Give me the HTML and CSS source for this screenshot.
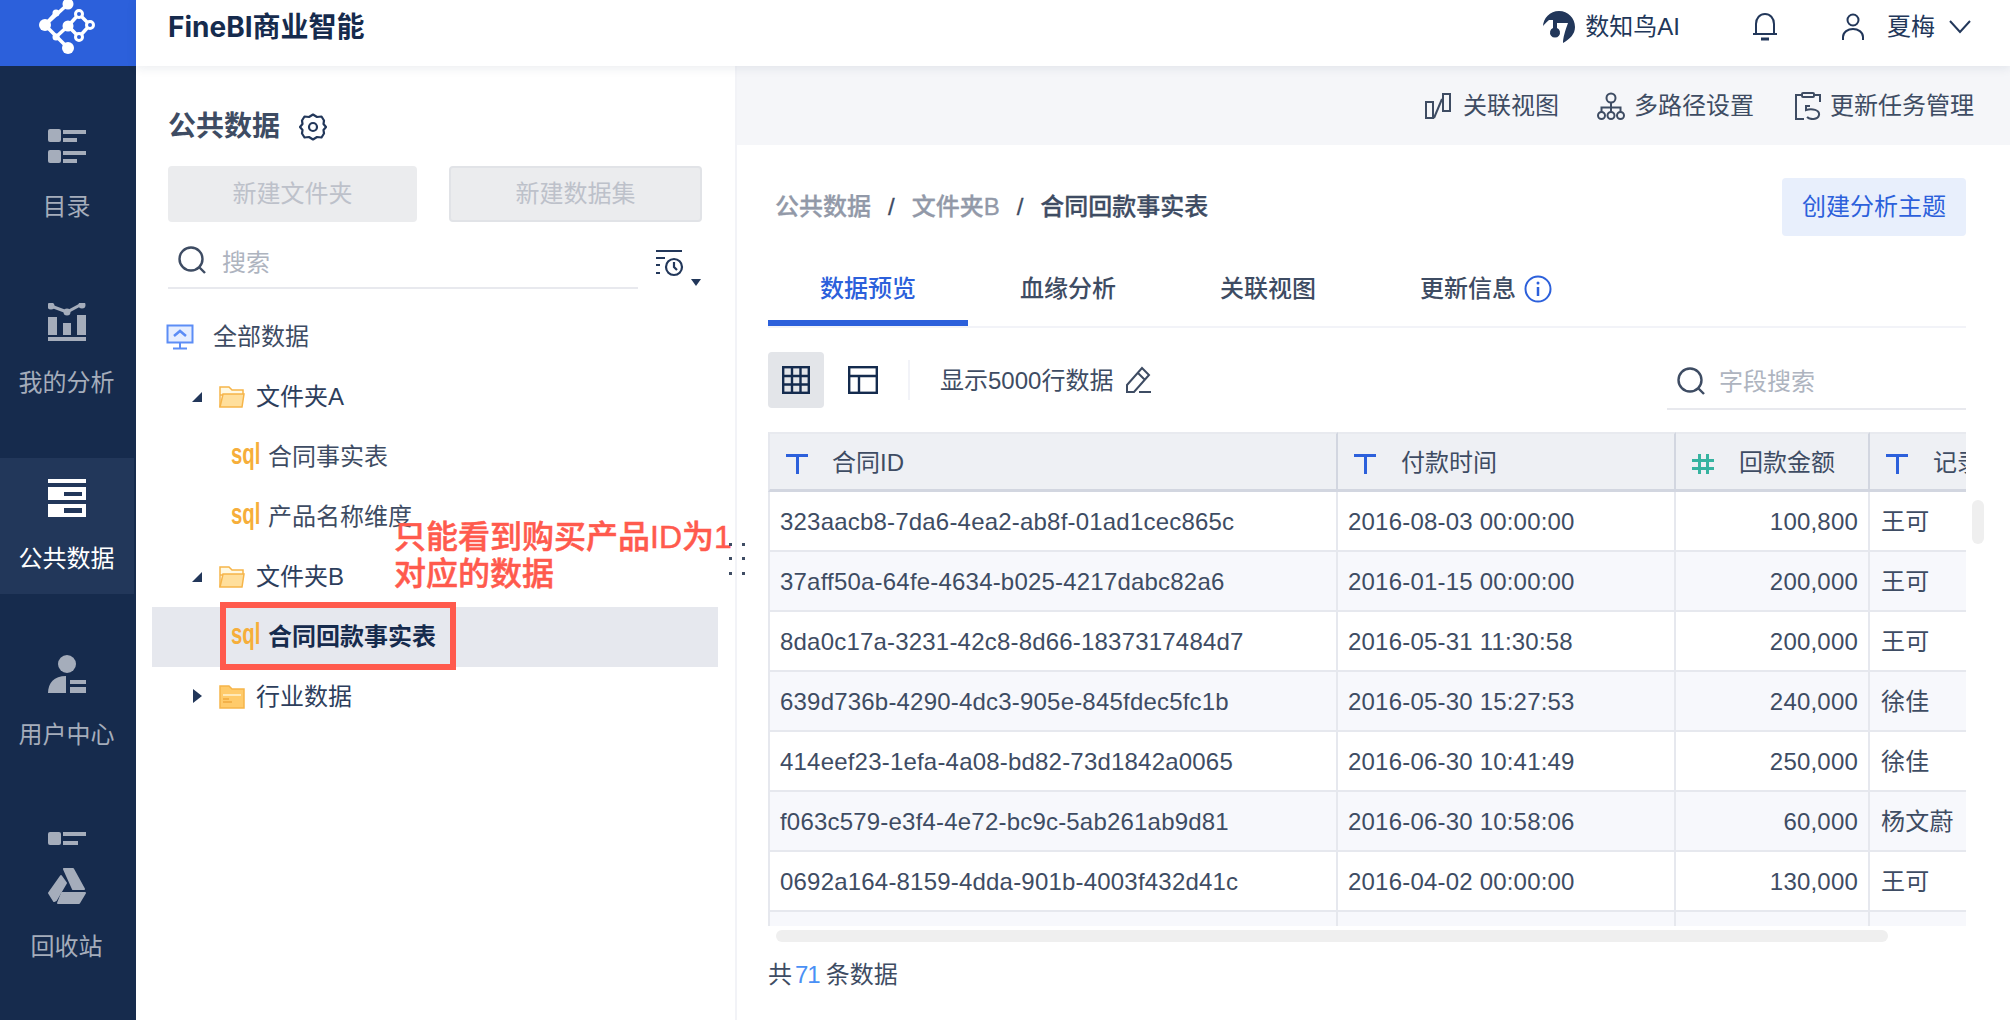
FILE: index.html
```html
<!DOCTYPE html>
<html lang="zh">
<head>
<meta charset="utf-8">
<title>FineBI商业智能</title>
<link rel="stylesheet" href="styles.css">
</head>
<body>
<div class="app">
  <aside class="side">
    <div class="logo">
      <svg width="66" height="60" viewBox="33 0 66 60" fill="none" stroke="#fff">
        <path d="M66 4L43 25L66 48M43 25L54 13M54 37L66 26L77 37L88 25L77 14L66 26" stroke-width="3.5"/>
        <g fill="#fff" stroke="none"><circle cx="66" cy="4" r="5.5"/><circle cx="43" cy="25" r="6"/><circle cx="54" cy="13" r="3.5"/><circle cx="66" cy="26" r="5.5"/><circle cx="54" cy="37" r="3.5"/><circle cx="66" cy="48" r="6"/></g>
        <g fill="#2C60DB" stroke-width="3"><circle cx="77" cy="14" r="3.5"/><circle cx="88" cy="25" r="3.5"/><circle cx="77" cy="37" r="3.5"/></g>
      </svg>
    </div>
    <nav class="nav">
      <a class="nav-item">
        <svg class="nav-icon" width="38" height="38" viewBox="0 0 38 38" fill="currentColor"><rect x="0" y="2" width="13" height="13" rx="2"/><rect x="15" y="3" width="23" height="4"/><rect x="15" y="11" width="14" height="4"/><rect x="0" y="23" width="13" height="13" rx="2"/><rect x="15" y="24" width="23" height="4"/><rect x="15" y="32" width="14" height="4"/></svg>
        <span>目录</span>
      </a>
      <a class="nav-item">
        <svg class="nav-icon" width="38" height="38" viewBox="0 0 38 38" fill="currentColor"><path d="M3 3L19 9L34 1" fill="none" stroke="currentColor" stroke-width="3"/><circle cx="3" cy="3" r="3.5"/><circle cx="19" cy="9" r="3.5"/><circle cx="34" cy="2" r="3.5"/><rect x="0" y="14" width="9" height="18"/><rect x="15" y="20" width="8" height="12"/><rect x="29" y="12" width="9" height="20"/><rect x="0" y="34" width="38" height="4"/></svg>
        <span>我的分析</span>
      </a>
      <a class="nav-item active">
        <svg class="nav-icon" width="38" height="38" viewBox="0 0 38 38"><rect width="38" height="4" fill="#fff"/><rect y="8" width="38" height="13" fill="#fff"/><rect x="16" y="13" width="18" height="4" fill="#22375A"/><rect y="25" width="38" height="13" fill="#fff"/><rect x="16" y="29" width="18" height="5" fill="#22375A"/></svg>
        <span>公共数据</span>
      </a>
      <a class="nav-item">
        <svg class="nav-icon" width="38" height="38" viewBox="0 0 38 38" fill="currentColor"><circle cx="19" cy="9" r="9"/><path d="M0 38C0 28 6 21 18 21V38Z"/><rect x="22" y="25" width="16" height="4"/><rect x="22" y="32" width="16" height="6"/></svg>
        <span>用户中心</span>
      </a>
      <a class="nav-item">
        <svg class="nav-stray" width="38" height="14" viewBox="0 0 38 14" fill="currentColor"><rect y="1" width="13" height="13" rx="2"/><rect x="15" y="1" width="23" height="4"/><rect x="15" y="10" width="15" height="4"/></svg>
        <svg class="nav-icon" width="40" height="38" viewBox="0 0 40 38" fill="currentColor" stroke="currentColor" stroke-width="2" stroke-linejoin="round"><path d="M17 2H26L37 22H26Z"/><path d="M14 9L19 16L9 33L7 34L2 26Z"/><path d="M15 26H38L32 36H11Z"/></svg>
        <span>回收站</span>
      </a>
    </nav>
  </aside>

  <div class="main">
    <header class="topbar">
      <div class="brand">FineBI商业智能</div>
      <div class="top-right">
        <div class="top-ai">
          <svg width="32" height="32" viewBox="0 0 32 32"><path d="M16 0C25 0 32 7 32 16C32 23 27 28 20 32C20 27 22 20 25 12H14V17A5 5 0 1 1 10 17V9H6C3 12 0 14 0 16C0 7 7 0 16 0Z" fill="#22375A"/></svg>
          <span>数知鸟AI</span>
        </div>
        <svg class="top-bell" width="26" height="30" viewBox="0 0 26 30" fill="none" stroke="#22375A" stroke-width="2"><path d="M1 22H25M4 22V12C4 6 8 2 13 2C18 2 22 6 22 12V22"/><path d="M9 27H17" stroke-width="3"/></svg>
        <svg class="top-user" width="22" height="28" viewBox="0 0 22 28" fill="none" stroke="#22375A" stroke-width="2"><circle cx="11" cy="7" r="5.5"/><path d="M1 27V24C1 19 6 16 11 16C16 16 21 19 21 24V27"/></svg>
        <span class="top-name">夏梅</span>
        <svg width="22" height="14" viewBox="0 0 22 14" fill="none" stroke="#22375A" stroke-width="2"><path d="M1 1L11 12L21 1"/></svg>
      </div>
    </header>

    <div class="content">
      <section class="tree-panel">
        <div class="panel-title">
          <span>公共数据</span>
          <svg width="28" height="28" viewBox="0 0 28 28" fill="none" stroke="#22375A" stroke-width="2.2" stroke-linejoin="round"><path d="M14 1.5L18 4L22.5 3.5L25 7.5L24.5 11L27 14L24.5 17L25 20.5L22.5 24.5L18 24L14 26.5L10 24L5.5 24.5L3 20.5L3.5 17L1 14L3.5 11L3 7.5L5.5 3.5L10 4Z"/><circle cx="14" cy="14" r="4"/></svg>
        </div>
        <div class="panel-btns">
          <button class="ghost first">新建文件夹</button>
          <button class="ghost second">新建数据集</button>
        </div>
        <div class="search-row">
          <div class="search-box">
            <svg width="28" height="28" viewBox="0 0 28 28" fill="none" stroke="#3E4C63" stroke-width="2.4"><circle cx="13" cy="13" r="11.5"/><path d="M21 21L27 27"/></svg>
            <span>搜索</span>
          </div>
          <div class="sort-btn">
            <svg width="28" height="28" viewBox="0 0 28 28" fill="none" stroke="#22375A" stroke-width="2.2"><path d="M0 2H26M0 9H9M0 16H4M0 24H4"/><circle cx="18" cy="18" r="8"/><path d="M18 13V18L21 21"/></svg>
            <i class="sort-caret"></i>
          </div>
        </div>
        <ul class="tree">
          <li class="row lv0">
            <svg width="28" height="26" viewBox="0 0 28 26"><rect x="1.5" y="1.5" width="25" height="17" fill="#E6EEFF" stroke="#5C8DF6" stroke-width="2"/><path d="M8 12L14 7L20 12" fill="none" stroke="#5C8DF6" stroke-width="2.5"/><path d="M14 19V24M7 24.500H21" stroke="#5C8DF6" stroke-width="2"/></svg>
            <span>全部数据</span>
          </li>
          <li class="row lv1">
            <i class="caret open"></i>
            <svg width="26" height="22" viewBox="0 0 26 22"><path d="M1 21V1H10L13 4H24V9H1Z" fill="#FFF9E3" stroke="#F6B54A" stroke-width="1.500"/><path d="M1 21L4 8H25L23 21Z" fill="#FFDF9C" stroke="#F6B54A" stroke-width="1.500"/></svg>
            <span>文件夹A</span>
          </li>
          <li class="row lv2"><b class="sql">sql</b><span>合同事实表</span></li>
          <li class="row lv2"><b class="sql">sql</b><span>产品名称维度</span></li>
          <li class="row lv1">
            <i class="caret open"></i>
            <svg width="26" height="22" viewBox="0 0 26 22"><path d="M1 21V1H10L13 4H24V9H1Z" fill="#FFF9E3" stroke="#F6B54A" stroke-width="1.500"/><path d="M1 21L4 8H25L23 21Z" fill="#FFDF9C" stroke="#F6B54A" stroke-width="1.500"/></svg>
            <span>文件夹B</span>
          </li>
          <li class="row lv2 selected"><b class="sql">sql</b><span>合同回款事实表</span></li>
          <li class="row lv1">
            <i class="caret closed"></i>
            <svg width="26" height="24" viewBox="0 0 26 24"><path d="M1 23V1H10L13 4H25V23Z" fill="#FFCB6B" stroke="#F6B54A" stroke-width="1.500"/><path d="M4 9H22V11H4Z" fill="#FFE9B8"/><path d="M4 14H10M4 17H13" stroke="#EFA93F" stroke-width="1.500"/></svg>
            <span>行业数据</span>
          </li>
        </ul>
        <div class="mark-box"></div>
        <div class="mark-text">只能看到购买产品ID为1<br>对应的数据</div>
        <svg class="drag-dots" width="16" height="32" viewBox="0 0 16 32" fill="#3E4C63"><rect x="0" width="3" height="3"/><rect x="13" width="3" height="3"/><rect x="0" y="14" width="3" height="3"/><rect x="13" y="14" width="3" height="3"/><rect x="0" y="29" width="3" height="3"/><rect x="13" y="29" width="3" height="3"/></svg>
      </section>

      <section class="detail">
        <div class="detail-bar">
          <a class="bar-item">
            <svg width="26" height="26" viewBox="0 0 26 26" fill="none" stroke="#3E4C63" stroke-width="2"><rect x="1" y="9" width="7" height="16"/><rect x="18" y="1" width="7" height="17"/><path d="M9 25L17 6"/></svg>
            <span>关联视图</span>
          </a>
          <a class="bar-item">
            <svg width="28" height="28" viewBox="0 0 28 28" fill="none" stroke="#3E4C63" stroke-width="2"><circle cx="14" cy="6" r="4.500"/><circle cx="4.500" cy="23.500" r="3.500"/><circle cx="14" cy="23.500" r="3.500"/><circle cx="23.500" cy="23.500" r="3.500"/><path d="M14 11V20M4.500 20V15.500H23.500V20"/></svg>
            <span>多路径设置</span>
          </a>
          <a class="bar-item">
            <svg width="26" height="28" viewBox="0 0 26 28" fill="none" stroke="#3E4C63" stroke-width="2"><path d="M7 3H1V27H9M19 3H25V10"/><rect x="7" y="1" width="12" height="4" rx="1"/><path d="M15 14H11V18C17 16 25 18 24 23C23 28 15 28 12 25"/></svg>
            <span>更新任务管理</span>
          </a>
        </div>
        <div class="detail-body">
          <div class="crumb-row">
            <div class="crumbs">
              <span class="crumb">公共数据</span><span class="sep">/</span>
              <span class="crumb">文件夹B</span><span class="sep">/</span>
              <span class="crumb now">合同回款事实表</span>
            </div>
            <button class="create">创建分析主题</button>
          </div>
          <div class="tabs">
            <a class="tab on">数据预览</a>
            <a class="tab">血缘分析</a>
            <a class="tab">关联视图</a>
            <a class="tab info">更新信息
              <svg width="28" height="28" viewBox="0 0 28 28" fill="none" stroke="#2C60DB" stroke-width="2"><circle cx="14" cy="14" r="12.500"/><path d="M14 12V21" stroke-width="2.500"/><circle cx="14" cy="8" r="1.500" fill="#2C60DB" stroke="none"/></svg>
            </a>
          </div>
          <div class="tools">
            <button class="tool on">
              <svg width="28" height="28" viewBox="0 0 28 28" fill="none" stroke="#142B4E" stroke-width="2.400"><rect x="1.200" y="1.200" width="25.600" height="25.600"/><path d="M10 1V27M18.500 1V27M1 10H27M1 18.500H27"/></svg>
            </button>
            <button class="tool">
              <svg width="30" height="28" viewBox="0 0 30 28" fill="none" stroke="#142B4E" stroke-width="2.400"><rect x="1.200" y="1.200" width="27.600" height="25.600"/><path d="M1 10H29M11 10V27"/></svg>
            </button>
            <i class="tool-div"></i>
            <span class="rows-label">显示5000行数据</span>
            <svg class="pencil" width="26" height="28" viewBox="0 0 26 28" fill="none" stroke="#3E4C63" stroke-width="2"><path d="M2 19L17 2L24 9L9 26H2ZM13 7L20 14M14 26H26"/></svg>
            <div class="field-search">
              <svg width="28" height="28" viewBox="0 0 28 28" fill="none" stroke="#3E4C63" stroke-width="2.400"><circle cx="13" cy="13" r="11.500"/><path d="M21 21L27 27"/></svg>
              <span>字段搜索</span>
            </div>
          </div>
          <div class="table-wrap">
            <table class="grid">
              <colgroup><col class="c1"><col class="c2"><col class="c3"><col class="c4"></colgroup>
              <thead>
                <tr>
                  <th><i class="ty t"></i>合同ID</th>
                  <th><i class="ty t"></i>付款时间</th>
                  <th><i class="ty n"></i>回款金额</th>
                  <th><i class="ty t"></i>记录人</th>
                </tr>
              </thead>
              <tbody>
                <tr><td>323aacb8-7da6-4ea2-ab8f-01ad1cec865c</td><td>2016-08-03 00:00:00</td><td class="num">100,800</td><td>王可</td></tr>
                <tr><td>37aff50a-64fe-4634-b025-4217dabc82a6</td><td>2016-01-15 00:00:00</td><td class="num">200,000</td><td>王可</td></tr>
                <tr><td>8da0c17a-3231-42c8-8d66-1837317484d7</td><td>2016-05-31 11:30:58</td><td class="num">200,000</td><td>王可</td></tr>
                <tr><td>639d736b-4290-4dc3-905e-845fdec5fc1b</td><td>2016-05-30 15:27:53</td><td class="num">240,000</td><td>徐佳</td></tr>
                <tr><td>414eef23-1efa-4a08-bd82-73d1842a0065</td><td>2016-06-30 10:41:49</td><td class="num">250,000</td><td>徐佳</td></tr>
                <tr><td>f063c579-e3f4-4e72-bc9c-5ab261ab9d81</td><td>2016-06-30 10:58:06</td><td class="num">60,000</td><td>杨文蔚</td></tr>
                <tr><td>0692a164-8159-4dda-901b-4003f432d41c</td><td>2016-04-02 00:00:00</td><td class="num">130,000</td><td>王可</td></tr>
                <tr><td>&nbsp;</td><td>&nbsp;</td><td class="num">&nbsp;</td><td>&nbsp;</td></tr>
              </tbody>
            </table>
          </div>
          <div class="h-scroll"></div>
          <div class="count">共<em>71</em>条数据</div>
        </div>
        <div class="v-scroll"></div>
      </section>
    </div>
  </div>
</div>
</body>
</html>
```

FILE: styles.css
```css
* { box-sizing: border-box; }
html, body { margin: 0; height: 100%; background: #fff; overflow: hidden; }
body { font: 24px/34px "Liberation Sans", "Noto Sans CJK SC", sans-serif; color: #3E4C63; }
ul { list-style: none; margin: 0; padding: 0; }
button { font: inherit; border: 0; padding: 0; }
svg { display: block; flex: none; }
i, em { font-style: normal; }

.app { display: flex; width: 2010px; height: 1020px; overflow: hidden; }

.side { width: 136px; flex: none; background: #162B4D; color: #A5ADBB; }
.logo { height: 66px; background: #2C60DB; display: flex; justify-content: center; overflow: hidden; }
.nav { display: flex; flex-direction: column; gap: 40px; padding-top: 40px; }
.nav-item { display: flex; flex-direction: column; align-items: center; min-height: 136px; width: 134px; padding-top: 21px; gap: 25px; }
.nav-item span { white-space: nowrap; margin-left: -1px; }
.nav-item .nav-stray { margin-bottom: -3px; margin-left: 0; }
.nav-item.active { background: #22375A; color: #fff; }

.main { flex: 1; min-width: 0; display: flex; flex-direction: column; }
.topbar { height: 66px; flex: none; display: flex; align-items: center; justify-content: space-between; padding: 0 39px 13px 32px; background: #fff; position: relative; z-index: 2; box-shadow: 0 2px 10px rgba(22, 43, 77, .09); }
.brand { font: 700 28px/40px Inter, "Noto Sans CJK SC", sans-serif; color: #162B4D; }
.top-right { display: flex; align-items: center; color: #22375A; }
.top-ai { display: flex; align-items: center; gap: 10px; }
.top-bell { margin-left: 72px; }
.top-user { margin-left: 64px; }
.top-name { margin: 0 14px 0 23px; }

.content { flex: 1; min-height: 0; display: flex; }

.tree-panel { width: 601px; flex: none; position: relative; border-right: 2px solid #F2F3F7; padding: 0 17px 0 16px; }
.panel-title { height: 100px; padding: 22px 0 0 16px; display: flex; align-items: center; gap: 19px; font-size: 28px; font-weight: 700; color: #3E4C63; }
.panel-btns { display: flex; justify-content: space-between; padding: 0 16px 0 16px; }
.ghost { height: 56px; background: #EBECEE; color: #BDC1CA; border-radius: 4px; }
.ghost.first { width: 249px; }
.ghost.second { width: 253px; border: 2px solid #E1E3E7; }
.search-row { display: flex; padding: 22px 0 0 16px; }
.search-box { width: 470px; height: 45px; border-bottom: 2px solid #E8E9EE; display: flex; align-items: flex-start; gap: 16px; padding: 2px 0 0 10px; color: #AEB4BF; }
.sort-btn { display: flex; margin: 5px 0 0 18px; position: relative; width: 44px; }
.sort-caret { position: absolute; left: 35px; top: 30px; border: 5px solid transparent; border-top: 7px solid #22375A; }

.tree { margin-top: 18px; }
.row { height: 60px; display: flex; align-items: center; white-space: nowrap; }
.lv0 { padding-left: 14px; gap: 19px; color: #3E4C63; }
.lv1 { padding-left: 40px; color: #2D3E5C; }
.lv1 span { margin-left: 11px; }
.lv2 { padding-left: 79px; gap: 11px; }
.caret { width: 27px; flex: none; display: block; position: relative; height: 14px; }
.caret.open::before { content: ""; position: absolute; left: 0; top: 2px; border-style: solid; border-width: 0 0 10px 10px; border-color: transparent transparent #22375A transparent; }
.caret.closed::before { content: ""; position: absolute; left: 1px; top: -1px; border-style: solid; border-width: 7px 0 7px 9px; border-color: transparent transparent transparent #22375A; }
.sql { width: 26px; flex: none; display: block; font: 700 30px/30px "Liberation Sans", sans-serif; color: #F6AE3A; transform: scaleX(.68); transform-origin: 0 50%; margin-top: -6px; }
.selected { background: #E6E8EE; color: #162B4D; font-weight: 700; }
.mark-box { position: absolute; left: 84px; top: 536px; width: 236px; height: 68px; border: 6px solid #FF5A4D; }
.mark-text { position: absolute; left: 258px; top: 453px; white-space: nowrap; font-size: 32px; line-height: 37px; font-weight: 500; color: #FF5A4D; -webkit-text-stroke: .5px #FF5A4D; }
.drag-dots { position: absolute; left: 593px; top: 477px; }

.detail { flex: 1; min-width: 0; position: relative; }
.detail-bar { height: 79px; background: #F5F6F9; display: flex; justify-content: flex-end; align-items: center; gap: 41px; padding-right: 36px; }
.bar-item { display: flex; align-items: center; gap: 9px; white-space: nowrap; }
.bar-item:first-child { gap: 12px; margin-right: -3px; }
.detail-body { padding: 0 44px 0 31px; }
.crumb-row { display: flex; justify-content: space-between; align-items: center; padding-top: 33px; }
.crumbs { display: flex; align-items: center; padding-left: 7px; font-weight: 500; color: #9299A8; white-space: nowrap; -webkit-text-stroke: .3px currentColor; }
.sep { margin: 0 17px; color: #3E4C63; font-weight: 400; }
.now { color: #3E4C63; }
.create { width: 184px; height: 58px; background: #E8EFFC; color: #2C60DB; border-radius: 4px; }
.tabs { display: flex; height: 92px; padding-top: 16px; border-bottom: 2px solid #F2F3F8; font-weight: 500; }
.tab { width: 200px; height: 74px; display: flex; align-items: center; padding: 5px 0 0 52px; gap: 8px; border-bottom: 6px solid transparent; }
.tab.on { color: #2C60DB; border-bottom-color: #2C60DB; }
.tools { display: flex; height: 58px; margin-top: 24px; }
.tool { width: 56px; height: 56px; background: none; border-radius: 4px; display: flex; align-items: center; justify-content: center; margin-right: 24px; }
.tool + .tool { width: 30px; margin-right: 30px; }
.tool.on { background: #E3E5E9; }
.tool-div { width: 2px; height: 40px; margin-top: 8px; background: #F2F3F8; margin-right: 30px; }
.rows-label { line-height: 58px; white-space: nowrap; }
.pencil { margin: 14px 0 0 12px; }
.field-search { margin-left: auto; width: 299px; border-bottom: 2px solid #E8E9EE; display: flex; gap: 14px; padding: 15px 0 0 10px; color: #AEB4BF; }
.field-search span { line-height: 30px; }

.table-wrap { margin-top: 22px; width: 1198px; height: 494px; overflow: hidden; }
.grid { width: 1300px; table-layout: fixed; border-collapse: separate; border-spacing: 0; }
.c1 { width: 570px; }
.c2 { width: 338px; }
.c3 { width: 194px; }
.c4 { width: 198px; }
.grid th { height: 60px; padding: 2px 0 0 16px; background: #EEF0F4; font-weight: 400; text-align: left; border: solid #D2D6E0; border-width: 2px 2px 3px 0; border-top-color: #E8EAEF; white-space: nowrap; }
.grid th:first-child, .grid td:first-child { border-left: 2px solid #E6E8EE; }
.grid th:first-child .ty { margin-right: 24px; }
.grid td { height: 60px; padding: 2px 10px 0 10px; letter-spacing: .2px; border: solid #E6E8EE; border-width: 0 2px 2px 0; white-space: nowrap; overflow: hidden; }
.grid td:nth-child(4) { padding-left: 11px; }
.grid tbody tr:nth-child(even) td { background: #F7F8FC; }
.grid .num { text-align: right; }
.ty { display: inline-block; position: relative; width: 22px; height: 20px; margin-right: 25px; vertical-align: -3px; }
.ty.t::before { content: ""; position: absolute; left: 0; right: 0; top: 0; height: 3px; background: #2C60DB; }
.ty.t::after { content: ""; position: absolute; left: 9.5px; width: 3px; top: 0; bottom: 0; background: #2C60DB; }
.ty.n { background:
  linear-gradient(#36B3A0, #36B3A0) 0 5px / 100% 3px no-repeat,
  linear-gradient(#36B3A0, #36B3A0) 0 13px / 100% 3px no-repeat,
  linear-gradient(#36B3A0, #36B3A0) 6px 0 / 3px 100% no-repeat,
  linear-gradient(#36B3A0, #36B3A0) 14px 0 / 3px 100% no-repeat; }
.h-scroll { width: 1112px; height: 12px; margin: 4px 0 0 8px; border-radius: 6px; background: #EFEFEF; }
.count { margin-top: 16px; white-space: nowrap; }
.count em { color: #4A90F5; margin: 0 6px 0 3px; letter-spacing: -1px; }
.v-scroll { position: absolute; top: 434px; right: 26px; width: 12px; height: 44px; border-radius: 6px; background: #EFEFEF; }
```
